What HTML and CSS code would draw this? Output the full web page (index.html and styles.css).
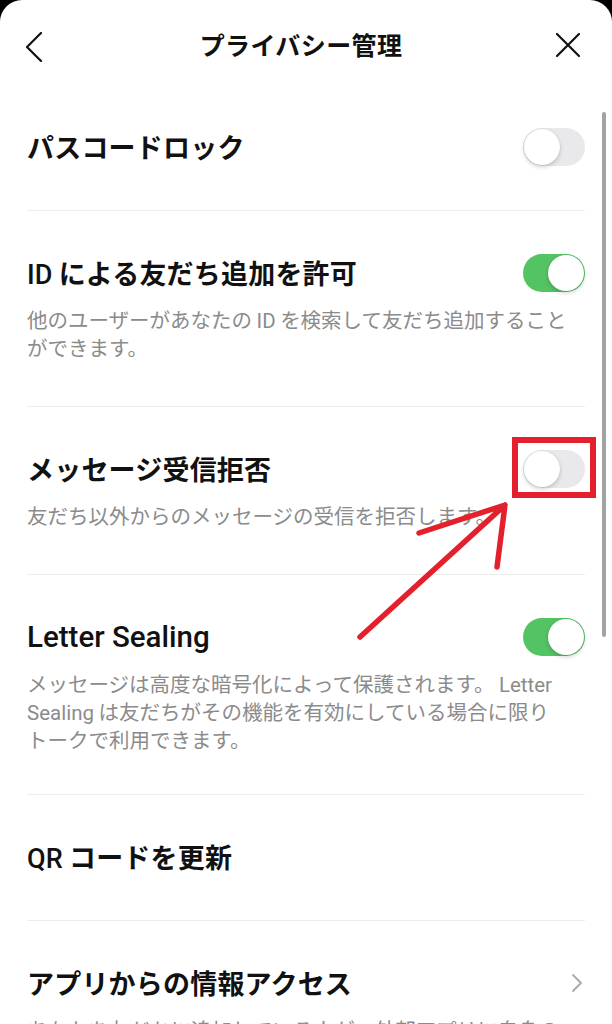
FILE: index.html
```html
<!DOCTYPE html>
<html lang="ja">
<head>
    <meta charset="UTF-8">
    <meta name="viewport" content="width=device-width, initial-scale=1.0">
    <title>プライバシー管理</title>
    <link rel="stylesheet" href="styles.css">
</head>
<body>
    <div class="screen">
        <header class="nav">
            <button class="nav-btn" aria-label="戻る">
                <svg width="24" height="30" viewBox="0 0 24 30"><path d="M18 1 L4 15 L18 29" fill="none" stroke="#111" stroke-width="2.2" stroke-linecap="round" stroke-linejoin="round"/></svg>
            </button>
            <h1>プライバシー管理</h1>
            <button class="nav-btn" aria-label="閉じる">
                <svg width="26" height="26" viewBox="0 0 26 26"><path d="M2 2 L24 24 M24 2 L2 24" fill="none" stroke="#111" stroke-width="2.2" stroke-linecap="round"/></svg>
            </button>
        </header>

        <ul class="settings">
            <li class="row">
                <div class="row-head">
                    <span class="row-title">パスコードロック</span>
                    <span class="switch"></span>
                </div>
            </li>
            <li class="row">
                <div class="row-head">
                    <span class="row-title"><span class="lat">ID</span>による友だち追加を許可</span>
                    <span class="switch on"></span>
                </div>
                <p class="desc">他のユーザーがあなたの<span class="lat lat-both">ID</span>を検索して友だち追加すること<br>ができます。</p>
            </li>
            <li class="row">
                <div class="row-head">
                    <span class="row-title">メッセージ受信拒否</span>
                    <span class="switch"></span>
                </div>
                <p class="desc">友だち以外からのメッセージの受信を拒否します。</p>
            </li>
            <li class="row row-tight">
                <div class="row-head">
                    <span class="row-title latin">Letter Sealing</span>
                    <span class="switch on"></span>
                </div>
                <p class="desc">メッセージは高度な暗号化によって保護されます。<span class="lat lat-both">Letter</span><br><span class="lat">Sealing</span>は友だちがその機能を有効にしている場合に限り<br>トークで利用できます。</p>
            </li>
            <li class="row">
                <div class="row-head">
                    <span class="row-title"><span class="lat">QR</span>コードを更新</span>
                </div>
            </li>
            <li class="row">
                <div class="row-head">
                    <span class="row-title">アプリからの情報アクセス</span>
                    <svg class="chevron" width="12" height="20" viewBox="0 0 12 20"><path d="M2 2 L10 10 L2 18" fill="none" stroke="#a8a8a8" stroke-width="1.8" stroke-linecap="round" stroke-linejoin="round"/></svg>
                </div>
                <p class="desc">あなたを友だちに追加している人が、外部アプリに自身の</p>
            </li>
        </ul>

        <div class="scrollbar"></div>

        <!-- hand-drawn annotation over the screenshot -->
        <svg class="annotation" width="612" height="1024" viewBox="0 0 612 1024">
            <rect x="515" y="440" width="78" height="55" fill="none" stroke="#e3202b" stroke-width="6"/>
            <path d="M360 637 L505 505 M419 533 L505 505 L497 567" fill="none" stroke="#e3202b" stroke-width="5.5" stroke-linecap="round" stroke-linejoin="round"/>
        </svg>
    </div>
</body>
</html>
```

FILE: styles.css
```css
* {
    margin: 0;
    padding: 0;
    box-sizing: border-box;
}

body {
    background: #000;
    font-family: "Noto Sans CJK JP", sans-serif;
    color: #111;
    overflow: hidden;
}

.screen {
    position: relative;
    width: 612px;
    height: 1024px;
    background: #fff;
    border-radius: 22px 22px 0 0;
    overflow: hidden;
}

.nav {
    display: flex;
    align-items: flex-start;
    justify-content: space-between;
    height: 85px;
    padding: 12px 31px 0 23px;
}

.nav h1 {
    font-size: 25px;
    font-weight: 700;
    line-height: 36px;
    padding-top: 14px;
    letter-spacing: 0.4px;
}

.nav-btn {
    border: none;
    background: none;
    display: flex;
    padding-top: 20px;
}

.settings {
    list-style: none;
}

.row {
    margin: 0 27px;
    padding: 44px 0 45px;
    border-bottom: 1px solid #ededed;
}

.row:last-child {
    border-bottom: none;
}

.row-tight {
    padding-bottom: 41px;
}

.row-head {
    display: flex;
    align-items: center;
    justify-content: space-between;
    height: 36px;
}

.row-title {
    font-size: 27px;
    font-weight: 700;
    line-height: 36px;
    letter-spacing: 0.2px;
}

.row-title.latin {
    font-family: "Roboto", sans-serif;
    font-weight: 500;
    font-size: 29.5px;
    letter-spacing: 0;
}

.lat {
    font-family: "Roboto", "Noto Sans CJK JP", sans-serif;
    line-height: 1;
    margin-right: 0.22em;
}

.lat-both {
    margin-left: 0.22em;
}

.row-title .lat {
    font-weight: 500;
}

.desc {
    margin-top: 14px;
    font-size: 20.5px;
    line-height: 28px;
    color: #8b8b8b;
}

.switch {
    position: relative;
    flex: none;
    width: 62px;
    height: 38px;
    border-radius: 19px;
    background: #e9e9eb;
}

.switch::after {
    content: "";
    position: absolute;
    top: 1px;
    left: 1px;
    width: 36px;
    height: 36px;
    border-radius: 50%;
    background: #fff;
    box-shadow: 0 2px 4px rgba(0, 0, 0, 0.18), 0 0 0 0.5px rgba(0, 0, 0, 0.08);
}

.switch.on {
    background: #54c363;
}

.switch.on::after {
    left: 25px;
}

.chevron {
    margin-right: 2px;
}

.scrollbar {
    position: absolute;
    top: 112px;
    right: 6px;
    width: 4px;
    height: 525px;
    border-radius: 2px;
    background: #a3a3a3;
}

.annotation {
    position: absolute;
    top: 0;
    left: 0;
}
```
